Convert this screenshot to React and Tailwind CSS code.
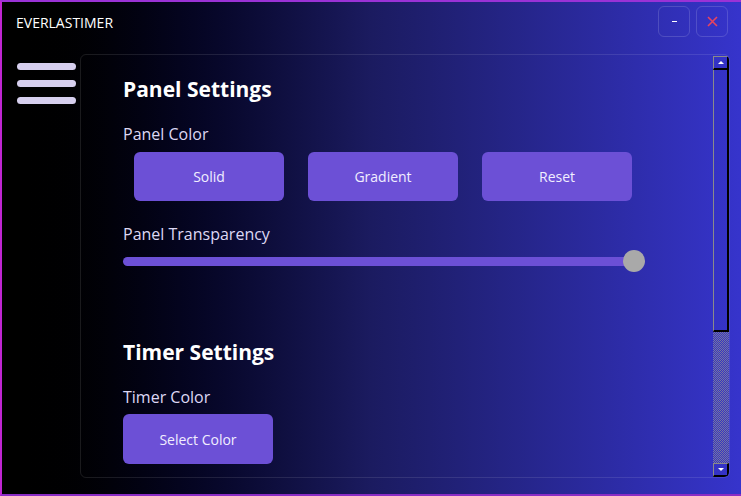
import React from "react";

const font = { fontFamily: '"Open Sans", "Noto Sans", sans-serif' };

function ScrollBar() {
  return (
    <div className="flex flex-col w-[16px] mt-[1px]">
      {/* up arrow */}
      <div className="h-[14px] flex items-center justify-center border-l border-t border-[#8a8a8a] border-r-2 border-r-black border-b-2 border-b-black">
        <div className="w-0 h-0 border-l-[3px] border-r-[3px] border-b-[3px] border-l-transparent border-r-transparent border-b-white" />
      </div>
      {/* thumb */}
      <div className="h-[262px] border-l border-l-[#8a8a8a] border-r-2 border-r-black border-b-2 border-b-black" />
      {/* track */}
      <div className="flex-1 bg-[repeating-conic-gradient(#7a7a9a_0_25%,transparent_0_50%)] bg-[length:2px_2px]" />
      {/* down arrow */}
      <div className="h-[14px] flex items-center justify-center border-l border-t border-[#8a8a8a] border-r-2 border-r-black border-b-2 border-b-black">
        <div className="w-0 h-0 border-l-[3px] border-r-[3px] border-t-[3px] border-l-transparent border-r-transparent border-t-white" />
      </div>
    </div>
  );
}

function ColorButton({ label, extra = "" }) {
  return (
    <button className={"w-[150px] h-[49px] rounded-md bg-[#6c50d6] text-[14px] text-[#f1eeff] " + extra}>
      {label}
    </button>
  );
}

export default function App() {
  return (
    <div
      className="w-[741px] h-[496px] flex flex-col overflow-hidden border-t-2 border-b-2 border-l-2 border-t-[#9a32d6] border-b-[#8a2cc4] border-l-[#c026d3] bg-gradient-to-r from-black via-[#1b1b60] to-[#3634cc]"
      style={font}
    >
      {/* title bar */}
      <div className="h-[52px] flex items-start justify-between pl-[14px] pr-[13px]">
        <div className="mt-[10px] text-[14px] text-white">EVERLASTIMER</div>
        <div className="flex gap-[6px] mt-[4px]">
          <button className="w-[32px] h-[31px] rounded-md border border-white/15 flex items-center justify-center">
            <div className="w-[5px] h-[1px] bg-white" />
          </button>
          <button className="w-[32px] h-[31px] rounded-md border border-white/15 flex items-center justify-center">
            <svg width="11" height="11" viewBox="0 0 11 11">
              <path d="M1 1 L10 10 M10 1 L1 10" stroke="#e8445f" strokeWidth="1.6" />
            </svg>
          </button>
        </div>
      </div>

      {/* body */}
      <div className="flex flex-1 pb-[16px] pr-[11px]">
        {/* side menu */}
        <div className="w-[78px] pl-[15px] pt-[9px] flex flex-col gap-[10px]">
          <div className="w-[59px] h-[7px] rounded-full bg-[#d6cfee]" />
          <div className="w-[59px] h-[7px] rounded-full bg-[#d6cfee]" />
          <div className="w-[59px] h-[7px] rounded-full bg-[#d6cfee]" />
        </div>

        {/* panel */}
        <div className="flex-1 flex border border-white/10 rounded-md overflow-hidden">
          <div className="flex-1 pl-[42px] pt-[20px] overflow-hidden">
            <h2 className="text-[21px] leading-[28px] font-bold text-white">Panel Settings</h2>
            <div className="mt-[20px] text-[16px] leading-[22px] text-[#ddd8f4]">Panel Color</div>
            <div className="mt-[7px] ml-[11px] flex gap-[24px]">
              <ColorButton label="Solid" />
              <ColorButton label="Gradient" />
              <ColorButton label="Reset" />
            </div>
            <div className="mt-[22px] text-[16px] leading-[22px] text-[#ddd8f4]">Panel Transparency</div>
            <div className="mt-[5px] w-[522px] h-[22px] flex items-center">
              <div className="flex-1 h-[9px] rounded-l-full bg-[#6c50d6]" />
              <div className="w-[22px] h-[22px] -ml-[11px] rounded-full bg-[#a9a9a9]" />
            </div>
            <h2 className="mt-[66px] text-[21px] leading-[28px] font-bold text-white">Timer Settings</h2>
            <div className="mt-[20px] text-[16px] leading-[22px] text-[#ddd8f4]">Timer Color</div>
            <div className="mt-[6px]">
              <ColorButton label="Select Color" extra="h-[50px]" />
            </div>
          </div>
          <ScrollBar />
        </div>
      </div>
    </div>
  );
}
